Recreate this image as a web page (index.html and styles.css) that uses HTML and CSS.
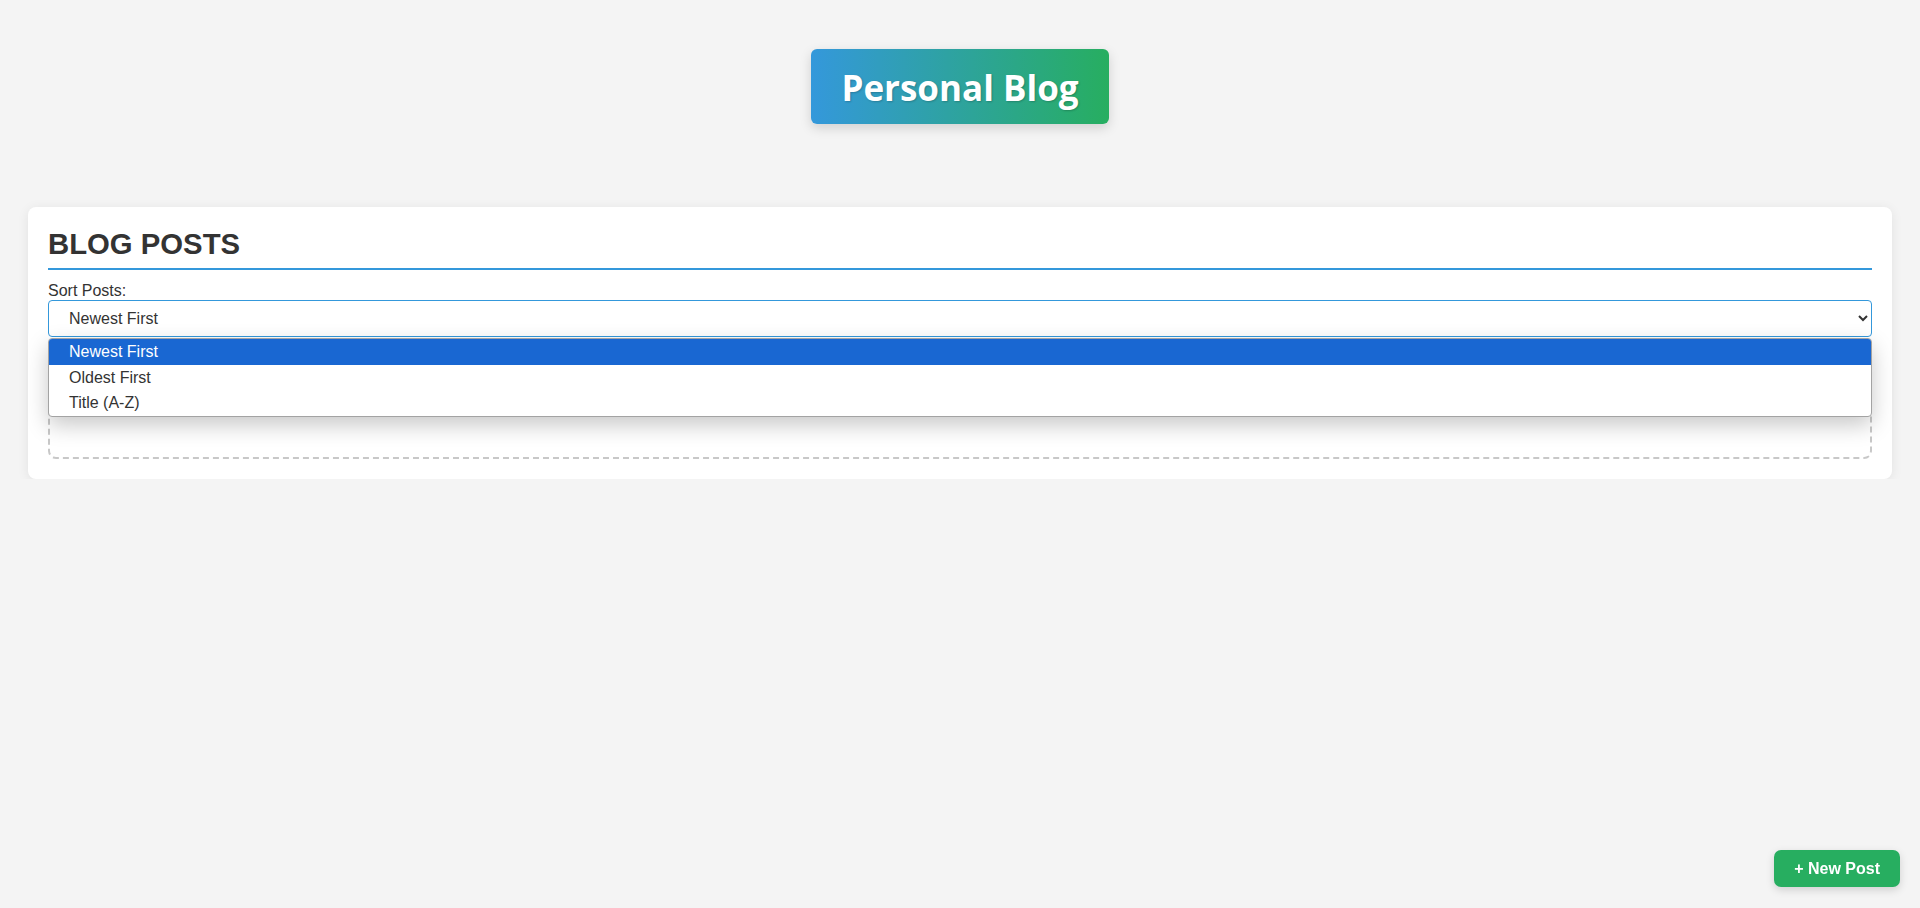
FILE: index.html
```html
<!DOCTYPE html>
<html lang="en">
<head>
<meta charset="utf-8">
<title>Personal Blog</title>
<link rel="stylesheet" href="styles.css">
</head>
<body>
<header class="site-header">
  <h1 class="site-title">Personal Blog</h1>
</header>
<main class="posts-card">
  <h2 class="posts-heading">BLOG POSTS</h2>
  <label class="sort-label" for="sort">Sort Posts:</label>
  <div class="sort-wrap">
    <select id="sort" class="sort-select">
      <option>Newest First</option>
      <option>Oldest First</option>
      <option>Title (A-Z)</option>
    </select>
    <ul class="sort-menu">
      <li class="sort-option is-active">Newest First</li>
      <li class="sort-option">Oldest First</li>
      <li class="sort-option">Title (A-Z)</li>
    </ul>
  </div>
  <div class="posts-empty">No posts yet. Click "+ New Post" to write your first post!</div>
</main>
<button class="new-post-btn">+ New Post</button>
</body>
</html>
```

FILE: styles.css
```css
* { box-sizing: border-box; }

body {
  margin: 0;
  padding: 49px 28px 0;
  background: #f4f4f4;
  font-family: "Liberation Sans", Arial, sans-serif;
  color: #333;
}

.site-header {
  display: flex;
  justify-content: center;
}

.site-title {
  margin: 0;
  padding: 15px 30px 13px;
  font-family: "Open Sans", "Noto Sans", sans-serif;
  font-weight: 700;
  font-size: 35px;
  color: #fff;
  background: linear-gradient(90deg, #3498db, #27ae60);
  border-radius: 6px;
  box-shadow: 0 4px 12px rgba(0, 0, 0, 0.15);
  text-shadow: 1px 1px 2px rgba(0, 0, 0, 0.2);
}

.posts-card {
  margin-top: 83px;
  background: #fff;
  border-radius: 8px;
  padding: 20px;
  box-shadow: 0 2px 12px rgba(0, 0, 0, 0.08);
}

.posts-heading {
  margin: 0 0 11px;
  font-size: 29.3px;
  line-height: 33px;
  font-weight: 700;
  color: #333;
  padding-bottom: 8px;
  border-bottom: 2px solid #3498db;
}

.sort-label {
  display: block;
  font-size: 16px;
  line-height: 19px;
  color: #333;
}

.sort-wrap {
  position: relative;
}

.sort-select {
  display: block;
  width: 100%;
  height: 37px;
  padding: 8px 16px;
  font-family: "Liberation Sans", Arial, sans-serif;
  font-size: 16px;
  color: #333;
  background: #fff;
  border: 1px solid #3498db;
  border-radius: 4px;
  outline: none;
}

.sort-menu {
  position: absolute;
  z-index: 10;
  left: 0;
  right: 0;
  top: 38px;
  margin: 0;
  padding: 0;
  list-style: none;
  background: #fff;
  border: 1px solid #a3a3a3;
  border-radius: 4px;
  overflow: hidden;
  box-shadow: 0 8px 22px rgba(0, 0, 0, 0.22);
}

.sort-option {
  height: 25.7px;
  line-height: 25.7px;
  padding-left: 20px;
  font-size: 16px;
  color: #333;
}

.sort-option.is-active {
  background: #1967d2;
  color: #fff;
}

.posts-empty {
  margin-top: 20px;
  height: 102px;
  display: flex;
  align-items: center;
  justify-content: center;
  border: 2px dashed #c8c8c8;
  border-radius: 8px;
  color: #888;
  font-size: 16px;
}

.new-post-btn {
  position: fixed;
  right: 20px;
  bottom: 21px;
  height: 37px;
  padding: 0 20px;
  border: none;
  border-radius: 7px;
  background: #27ae60;
  color: #fff;
  font-family: "Liberation Sans", Arial, sans-serif;
  font-weight: 700;
  font-size: 16px;
  box-shadow: 0 3px 8px rgba(0, 0, 0, 0.15);
  cursor: pointer;
}
```
